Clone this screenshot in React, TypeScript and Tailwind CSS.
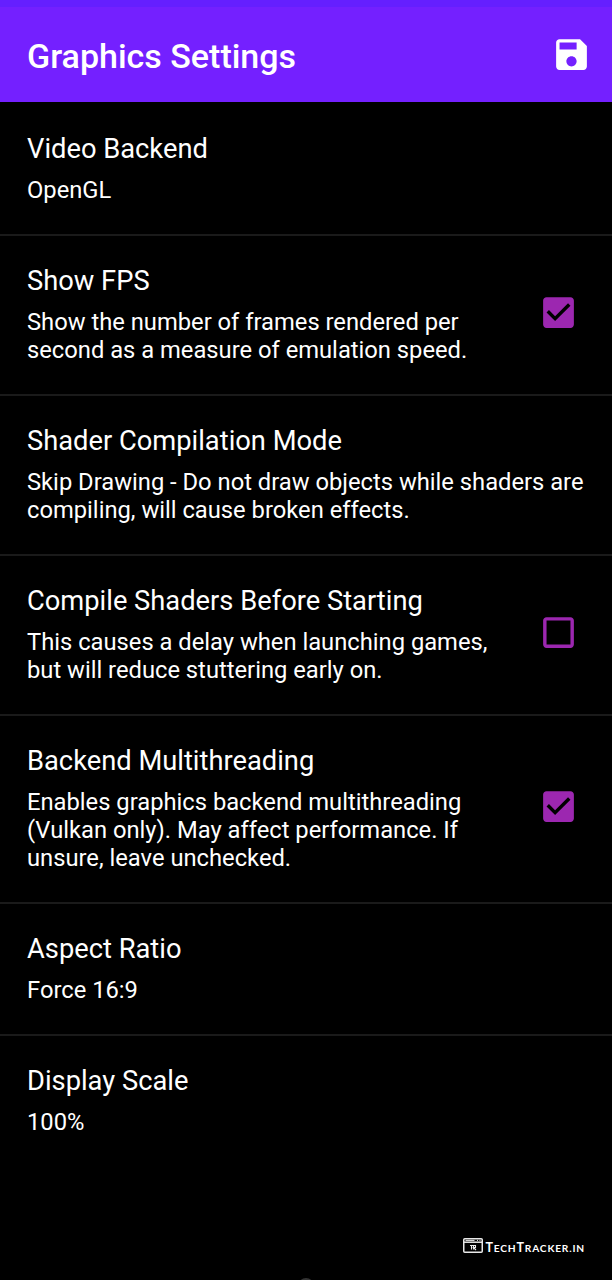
interface Setting {
  title: string;
  lines: string[];
  h: string;
  checked?: boolean;
}

const rows: Setting[] = [
  { title: "Video Backend", lines: ["OpenGL"], h: "h-[132px]" },
  { title: "Show FPS", lines: ["Show the number of frames rendered per", "second as a measure of emulation speed."], h: "h-[160px]", checked: true },
  { title: "Shader Compilation Mode", lines: ["Skip Drawing - Do not draw objects while shaders are", "compiling, will cause broken effects."], h: "h-[160px]" },
  { title: "Compile Shaders Before Starting", lines: ["This causes a delay when launching games,", "but will reduce stuttering early on."], h: "h-[160px]", checked: false },
  { title: "Backend Multithreading", lines: ["Enables graphics backend multithreading", "(Vulkan only). May affect performance. If", "unsure, leave unchecked."], h: "h-[188px]", checked: true },
  { title: "Aspect Ratio", lines: ["Force 16:9"], h: "h-[132px]" },
  { title: "Display Scale", lines: ["100%"], h: "h-[132px]" },
];

function Box({ checked }: { checked: boolean }) {
  return (
    <svg width="41" height="41" viewBox="0 0 24 24" className="mb-[3px] shrink-0">
      {checked ? (
        <path fill="#9c27b0" d="M19 3H5c-1.11 0-2 .9-2 2v14c0 1.1.89 2 2 2h14c1.11 0 2-.9 2-2V5c0-1.1-.89-2-2-2zm-9 14l-5-5 1.41-1.41L10 14.17l7.59-7.59L19 8l-9 9z" />
      ) : (
        <path fill="#9c27b0" d="M19 5v14H5V5h14m0-2H5c-1.1 0-2 .9-2 2v14c0 1.1.9 2 2 2h14c1.1 0 2-.9 2-2V5c0-1.1-.9-2-2-2z" />
      )}
    </svg>
  );
}

export default function App() {
  return (
    <div className="relative flex h-[1280px] w-[612px] flex-col overflow-hidden bg-black font-['Roboto',sans-serif] text-white">
      <div className="h-[7px] shrink-0 bg-[#651fff]" />
      <header className="flex h-[95px] shrink-0 items-center justify-between bg-[#7420ff] pl-[27px] pr-[20px]">
        <h1 className="pt-[4px] text-[34px] font-medium">Graphics Settings</h1>
        <svg width="41" height="41" viewBox="0 0 24 24"><path fill="white" d="M17 3H5c-1.11 0-2 .9-2 2v14c0 1.1.89 2 2 2h14c1.1 0 2-.9 2-2V7l-4-4zm-5 16c-1.66 0-3-1.34-3-3s1.34-3 3-3 3 1.34 3 3-1.34 3-3 3zm3-10H5V5h10v4z" /></svg>
      </header>
      <main className="flex flex-col pt-[2px]">
        {rows.map((r) => (
          <section key={r.title} className={`${r.h} flex shrink-0 items-center border-b-2 border-[#1a1a1a] pb-[2px] pl-[27px] pr-[33px] last:border-transparent`}>
            <div className="flex-1 whitespace-nowrap">
              <h2 className="text-[27.3px] leading-[33px]">{r.title}</h2>
              <div className="mt-[10px] text-[23.74px] leading-[28px]">
                {r.lines.map((l) => <p key={l}>{l}</p>)}
              </div>
            </div>
            {r.checked !== undefined && <Box checked={r.checked} />}
          </section>
        ))}
      </main>
      <footer className="mt-auto flex h-[46px] shrink-0 items-start justify-end pr-[27px] pt-[4px]">
        <svg width="20" height="15" viewBox="0 0 20 15" fill="none" stroke="#e8e8e8" className="shrink-0">
          <rect x=".75" y=".75" width="18.5" height="13.5" rx="1" strokeWidth="1.5" />
          <path d="M1 4.2h18" strokeWidth="1.5" />
          <path d="M2.5 2.4h9M14 2.4h1M16.5 2.4h1" strokeWidth="1" />
          <path d="M7 7.5h4M8.5 7.5v4M10.5 11.5v-4h2v2h-2l2.5 2.5" strokeWidth="1.1" />
        </svg>
        <span className="ml-[2px] mt-[3px] whitespace-nowrap font-['Lato',sans-serif] text-[10.2px] font-bold leading-[14px] tracking-[0.82px]">
          <span className="text-[12.5px]">T</span>ECH<span className="text-[12.5px]">T</span>RACKER.IN
        </span>
      </footer>
      <div className="absolute -bottom-[14px] left-[298px] h-4 w-4 rounded-full bg-[#333]" />
    </div>
  );
}
